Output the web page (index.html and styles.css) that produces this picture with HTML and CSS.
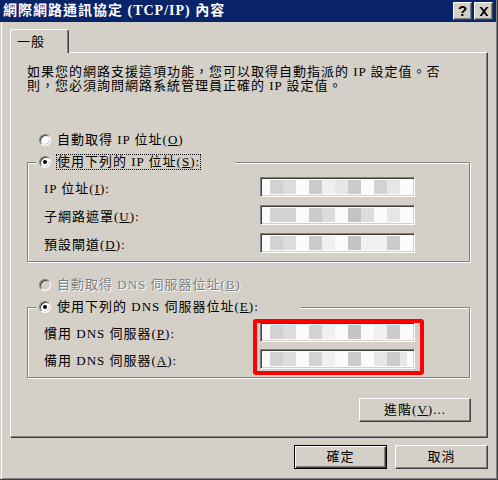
FILE: index.html
```html
<!DOCTYPE html>
<html lang="zh-Hant">
<head>
<meta charset="utf-8">
<title>網際網路通訊協定 (TCP/IP) 內容</title>
<link rel="stylesheet" href="styles.css">
</head>
<body>
<div class="window">
  <div class="titlebar">
    <span class="title">網際網路通訊協定 (TCP/IP) 內容</span>
    <div class="caption-btns">
      <span class="cbtn help">?</span>
      <span class="cbtn close"><svg width="10" height="9" viewBox="0 0 10 9"><path d="M0.5 0h2.2l2.3 3.1 2.3-3.1h2.2l-3.4 4.5 3.4 4.5h-2.2l-2.3-3.1-2.3 3.1h-2.2l3.4-4.5z" fill="#000"/></svg></span>
    </div>
  </div>
  <div class="client">
    <div class="tabs"><div class="tab">一般</div></div>
    <div class="panel">
      <p class="desc">如果您的網路支援這項功能，您可以取得自動指派的 IP 設定值。否<br>則，您必須詢問網路系統管理員正確的 IP 設定值。</p>
      <div class="opt opt-first"><span class="radio"></span><span>自動取得 IP 位址(<u>O</u>)</span></div>
      <div class="group">
        <div class="legend lg-ip"><span class="radio on"></span><span class="focus">使用下列的 IP 位址(<u>S</u>):</span></div>
        <div class="frow"><span>IP 位址(<u>I</u>):</span>
          <div class="field"><i class="px b3"></i><i class="px b4"></i><i class="px"></i><i class="px b2"></i><i class="px b6"></i><i class="px b5"></i><i class="px b2"></i><i class="px"></i><i class="px b3"></i><i class="px b5"></i></div>
        </div>
        <div class="frow"><span>子網路遮罩(<u>U</u>):</span>
          <div class="field"><i class="px b3"></i><i class="px b3"></i><i class="px"></i><i class="px b2"></i><i class="px b4"></i><i class="px"></i><i class="px b1"></i><i class="px b4"></i><i class="px"></i><i class="px b5"></i></div>
        </div>
        <div class="frow"><span>預設閘道(<u>D</u>):</span>
          <div class="field"><i class="px b3"></i><i class="px b4"></i><i class="px"></i><i class="px b2"></i><i class="px b6"></i><i class="px"></i><i class="px b1"></i><i class="px b6"></i><i class="px b6"></i><i class="px b2"></i></div>
        </div>
      </div>
      <div class="opt opt-dns disabled"><span class="radio"></span><span>自動取得 DNS 伺服器位址(<u>B</u>)</span></div>
      <div class="group g-dns">
        <div class="legend lg-dns"><span class="radio on"></span><span>使用下列的 DNS 伺服器位址(<u>E</u>):</span></div>
        <div class="frow"><span>慣用 DNS 伺服器(<u>P</u>):</span>
          <div class="field"><i class="px b3"></i><i class="px b4"></i><i class="px"></i><i class="px b3"></i><i class="px b6"></i><i class="px"></i><i class="px b1"></i><i class="px"></i><i class="px b6"></i><i class="px b2"></i></div>
        </div>
        <div class="frow"><span>備用 DNS 伺服器(<u>A</u>):</span>
          <div class="field"><i class="px b3"></i><i class="px b4"></i><i class="px"></i><i class="px b3"></i><i class="px b6"></i><i class="px"></i><i class="px b2"></i><i class="px"></i><i class="px b5"></i><i class="px b2"></i><i class="px b5 half"></i></div>
        </div>
      </div>
      <div class="adv-row"><button class="btn adv">進階(<u>V</u>)...</button></div>
    </div>
    <div class="footer">
      <button class="btn default">確定</button>
      <button class="btn">取消</button>
    </div>
  </div>
  <div class="highlight"></div>
</div>
</body>
</html>
```
FILE: styles.css
```css
body {
  margin: 0;
  font-family: "Liberation Serif", "Noto Sans CJK TC", serif;
  font-size: 13px;
  letter-spacing: 1px;
  color: #000;
  background: #d4d0c8;
}

.window {
  position: relative;
  width: 498px;
  height: 480px;
  box-sizing: border-box;
  background: #d4d0c8;
  border-right: 1px solid #404040;
  border-bottom: 1px solid #404040;
  box-shadow: inset 1px 0 #d4d0c8, inset 2px 0 #fff, inset -1px -1px #808080;
  display: flex;
  flex-direction: column;
}

.titlebar {
  height: 22px;
  margin-right: 1px;
  background: #0a246a;
  display: flex;
  align-items: center;
  padding: 0 3px;
}

.title {
  color: #fff;
  font-weight: bold;
  font-size: 14px;
  line-height: 16px;
}

.caption-btns {
  margin-left: auto;
  display: flex;
  gap: 2px;
}

.cbtn {
  width: 19px;
  height: 18px;
  box-sizing: border-box;
  background: #d4d0c8;
  border: 1px solid;
  border-color: #fff #404040 #404040 #fff;
  box-shadow: inset -1px -1px #808080;
  display: flex;
  align-items: center;
  justify-content: center;
  font-family: "Liberation Sans", sans-serif;
  font-weight: bold;
  font-size: 15px;
  letter-spacing: 0;
  line-height: 16px;
}

.client {
  flex: 1;
  padding: 7px 9px 0 10px;
  display: flex;
  flex-direction: column;
}

.tabs {
  display: flex;
  height: 23px;
}

.tab {
  position: relative;
  z-index: 1;
  width: 59px;
  height: 24px;
  box-sizing: border-box;
  background: #d4d0c8;
  border-left: 1px solid #fff;
  border-top: 1px solid #fff;
  border-right: 1px solid #404040;
  box-shadow: inset -1px 0 #808080;
  border-top-left-radius: 3px;
  border-top-right-radius: 3px;
  padding-left: 6px;
  line-height: 24px;
}

.panel {
  height: 386px;
  box-sizing: border-box;
  border: 1px solid;
  border-color: #fff #404040 #404040 #fff;
  box-shadow: inset -1px -1px #808080;
  padding: 0 17px 0 16px;
  display: flex;
  flex-direction: column;
}

.desc {
  margin: 12px 0 0;
  line-height: 14px;
}

.opt {
  display: flex;
  align-items: center;
  gap: 6px;
  height: 14px;
  line-height: 14px;
  margin-left: 12px;
}

.opt-first { margin-top: 40px; }
.opt-dns { margin-top: 16px; }

.disabled {
  color: #808080;
  text-shadow: 1px 1px #fff;
}

.radio {
  width: 12px;
  height: 12px;
  flex: none;
  box-sizing: border-box;
  border-radius: 50%;
  background: #fff;
  border: 1px solid;
  border-color: #808080 #fff #fff #808080;
  box-shadow: inset 1px 1px #404040, inset -1px -1px #d4d0c8;
  display: flex;
  align-items: center;
  justify-content: center;
}

.disabled .radio { background: #d4d0c8; }

.radio.on::after {
  content: "";
  width: 4px;
  height: 4px;
  border-radius: 50%;
  background: #000;
}

.group {
  margin-top: 15px;
  border: 1px solid #808080;
  box-shadow: inset 1px 1px #fff, 1px 1px #fff;
  padding-bottom: 8px;
}

.legend {
  margin: -8px 0 0 8px;
  height: 14px;
  line-height: 14px;
  box-sizing: border-box;
  padding-left: 3px;
  background: #d4d0c8;
  display: flex;
  align-items: center;
  gap: 6px;
}

.lg-ip { width: 199px; }
.lg-dns { width: 265px; }

.focus {
  outline: 1px dotted #000;
  outline-offset: 0;
}

.frow {
  display: grid;
  grid-template-columns: 216px 155px;
  align-items: center;
  height: 20px;
  padding-left: 16px;
  margin-top: 8px;
}

.g-dns .frow + .frow { margin-top: 7px; }

.field {
  height: 20px;
  box-sizing: border-box;
  border: 1px solid;
  border-color: #808080 #fff #fff #808080;
  box-shadow: inset 1px 1px #404040, inset -1px -1px #d4d0c8;
  background: #fbfbfb;
  display: flex;
  padding: 2px 0 0 9px;
  overflow: hidden;
}

.px {
  width: 13px;
  height: 14px;
  flex: none;
}
.px.half { width: 7px; }
.b1 { background: #c4c4c4; }
.b2 { background: #cbcbcb; }
.b3 { background: #d2d2d2; }
.b4 { background: #dcdcdc; }
.b5 { background: #e6e6e6; }
.b6 { background: #f0f0f0; }

.adv-row {
  margin-top: 20px;
  display: flex;
  justify-content: flex-end;
  margin-right: -1px;
}

.btn {
  font: inherit;
  letter-spacing: 1px;
  color: #000;
  height: 24px;
  box-sizing: border-box;
  background: #d4d0c8;
  border: 1px solid;
  border-color: #fff #404040 #404040 #fff;
  box-shadow: inset -1px -1px #808080;
  padding: 0;
  line-height: 20px;
  width: 93px;
}

.adv { width: 112px; }

.btn.default {
  border: 1px solid #000;
  box-shadow: inset 1px 1px #fff, inset -1px -1px #404040, inset -2px -2px #808080;
}

.footer {
  display: flex;
  justify-content: flex-end;
  gap: 8px;
  margin-top: 7px;
}

.highlight {
  position: absolute;
  left: 253px;
  top: 319px;
  width: 171px;
  height: 56px;
  box-sizing: border-box;
  border: 4px solid #f00;
  border-radius: 3px;
}
```
